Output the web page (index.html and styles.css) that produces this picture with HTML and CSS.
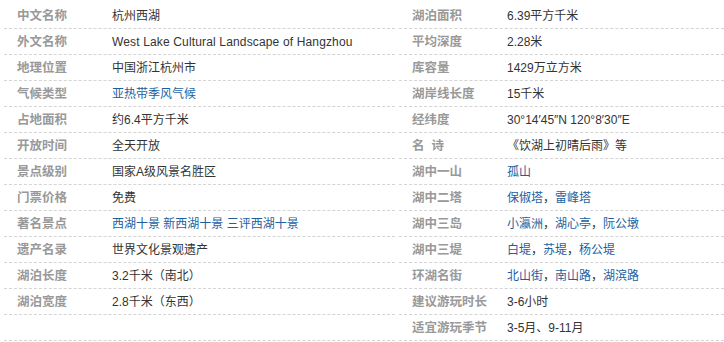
FILE: index.html
```html
<!DOCTYPE html>
<html lang="zh-CN">
<head>
  <meta charset="UTF-8">
  <title>杭州西湖 基本信息</title>
  <link rel="stylesheet" href="styles.css">
</head>
<body>

  <div class="basic-info">
    <!-- 左栏 -->
    <dl class="info-col left">
      <div class="info-row"><dt>中文名称</dt><dd>杭州西湖</dd></div>
      <div class="info-row"><dt>外文名称</dt><dd class="latin">West Lake Cultural Landscape of Hangzhou</dd></div>
      <div class="info-row"><dt>地理位置</dt><dd>中国浙江杭州市</dd></div>
      <div class="info-row"><dt>气候类型</dt><dd><a href="#">亚热带季风气候</a></dd></div>
      <div class="info-row"><dt>占地面积</dt><dd>约6.4平方千米</dd></div>
      <div class="info-row"><dt>开放时间</dt><dd>全天开放</dd></div>
      <div class="info-row"><dt>景点级别</dt><dd>国家A级风景名胜区</dd></div>
      <div class="info-row"><dt>门票价格</dt><dd>免费</dd></div>
      <div class="info-row"><dt>著名景点</dt><dd><a href="#">西湖十景</a> <a href="#">新西湖十景</a> <a href="#">三评西湖十景</a></dd></div>
      <div class="info-row"><dt>遗产名录</dt><dd>世界文化景观遗产</dd></div>
      <div class="info-row"><dt>湖泊长度</dt><dd>3.2千米（南北）</dd></div>
      <div class="info-row"><dt>湖泊宽度</dt><dd>2.8千米（东西）</dd></div>
      <div class="info-row"><dt></dt><dd></dd></div>
    </dl>

    <!-- 右栏 -->
    <dl class="info-col right">
      <div class="info-row"><dt>湖泊面积</dt><dd>6.39平方千米</dd></div>
      <div class="info-row"><dt>平均深度</dt><dd>2.28米</dd></div>
      <div class="info-row"><dt>库容量</dt><dd>1429万立方米</dd></div>
      <div class="info-row"><dt>湖岸线长度</dt><dd>15千米</dd></div>
      <div class="info-row"><dt>经纬度</dt><dd>30°14′45″N 120°8′30″E</dd></div>
      <div class="info-row"><dt>名&nbsp;&nbsp;诗</dt><dd>《饮湖上初晴后雨》等</dd></div>
      <div class="info-row"><dt>湖中一山</dt><dd><a href="#">孤山</a></dd></div>
      <div class="info-row"><dt>湖中二塔</dt><dd><a href="#">保俶塔</a>，<a href="#">雷峰塔</a></dd></div>
      <div class="info-row"><dt>湖中三岛</dt><dd><a href="#">小瀛洲</a>，<a href="#">湖心亭</a>，<a href="#">阮公墩</a></dd></div>
      <div class="info-row"><dt>湖中三堤</dt><dd><a href="#">白堤</a>，<a href="#">苏堤</a>，<a href="#">杨公堤</a></dd></div>
      <div class="info-row"><dt>环湖名街</dt><dd><a href="#">北山街</a>，<a href="#">南山路</a>，<a href="#">湖滨路</a></dd></div>
      <div class="info-row"><dt>建议游玩时长</dt><dd>3-6小时</dd></div>
      <div class="info-row"><dt>适宜游玩季节</dt><dd>3-5月、9-11月</dd></div>
    </dl>
  </div>

</body>
</html>
```

FILE: styles.css
```css
body {
  margin: 0;
  background: #fff;
  font-family: "Liberation Sans", "Noto Sans CJK SC", sans-serif;
  font-size: 12px;
  color: #333;
}
.basic-info {
  display: flex;
  gap: 4px;
  padding: 3px 0 0 4px;
}
.info-col {
  margin: 0;
}
.info-col.left {
  width: 391px;
}
.info-col.right {
  flex: 1;
}
.info-row {
  display: flex;
  height: 25px;
  line-height: 26px;
  border-bottom: 1px dashed #d4d4d4;
}
.info-row dt {
  width: 95px;
  padding-left: 13px;
  flex-shrink: 0;
  font-size: 12.5px;
  font-weight: bold;
  color: #999;
  white-space: nowrap;
}
.info-row dd {
  margin: 0;
  white-space: nowrap;
}
.info-row dd.latin {
  letter-spacing: 0.15px;
}
.info-row dd a {
  color: #1d5f9f;
  text-decoration: none;
}
```
